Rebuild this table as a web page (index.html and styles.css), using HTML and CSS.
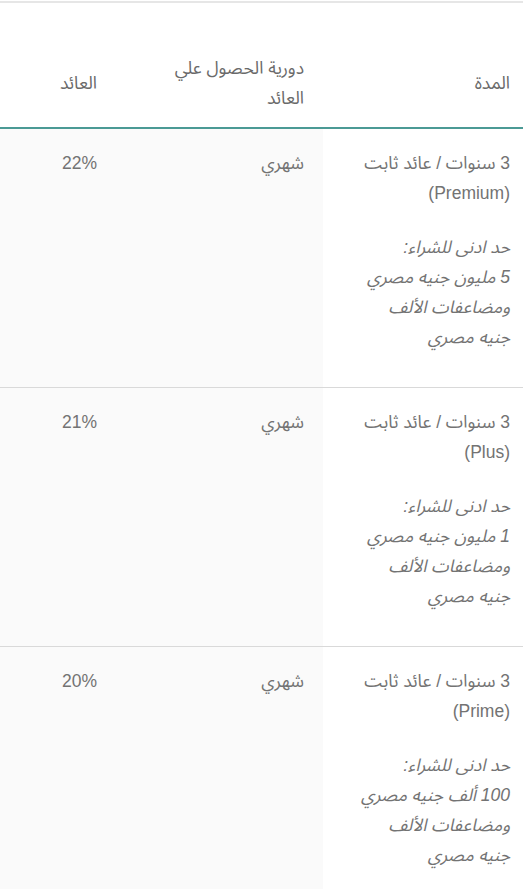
FILE: index.html
```html
<!DOCTYPE html>
<html lang="ar" dir="rtl">
<head>
<meta charset="utf-8">
<link rel="stylesheet" href="styles.css">
</head>
<body>
<table class="rates">
  <colgroup>
    <col class="col-term">
    <col class="col-period">
    <col class="col-yield">
  </colgroup>
  <thead>
    <tr>
      <th class="c-term">المدة</th>
      <th class="c-period">دورية الحصول علي<br>العائد</th>
      <th class="c-yield">العائد</th>
    </tr>
  </thead>
  <tbody>
    <tr>
      <td class="c-term">
        <p class="plan">3 سنوات / عائد ثابت<br>(Premium)</p>
        <p class="min">حد ادنى للشراء:<br>5 مليون جنيه مصري<br>ومضاعفات الألف<br>جنيه مصري</p>
      </td>
      <td class="c-period shade">شهري</td>
      <td class="c-yield shade">22%</td>
    </tr>
    <tr>
      <td class="c-term">
        <p class="plan">3 سنوات / عائد ثابت<br>(Plus)</p>
        <p class="min">حد ادنى للشراء:<br>1 مليون جنيه مصري<br>ومضاعفات الألف<br>جنيه مصري</p>
      </td>
      <td class="c-period shade">شهري</td>
      <td class="c-yield shade">21%</td>
    </tr>
    <tr>
      <td class="c-term">
        <p class="plan">3 سنوات / عائد ثابت<br>(Prime)</p>
        <p class="min">حد ادنى للشراء:<br>100 ألف جنيه مصري<br>ومضاعفات الألف<br>جنيه مصري</p>
      </td>
      <td class="c-period shade">شهري</td>
      <td class="c-yield shade">20%</td>
    </tr>
  </tbody>
</table>
</body>
</html>
```

FILE: styles.css
```css
html, body {
  margin: 0;
  padding: 0;
  background: #ffffff;
}

body {
  font-family: "Liberation Sans", "Noto Sans Arabic", "DejaVu Sans", sans-serif;
  font-size: 17.5px;
  line-height: 30px;
  color: #737373;
}

.rates {
  width: 523px;
  border-collapse: collapse;
  border-top: 2px solid #e6e6e6;
  margin-top: 1px;
  table-layout: fixed;
}

.col-term { width: 200px; }
.col-period { width: 213px; }
.col-yield { width: 110px; }

.rates th {
  font-weight: normal;
  text-align: right;
  vertical-align: middle;
  padding: 50px 13px 14px;
  border-bottom: 2px solid #4b9a95;
  color: #6a6a6a;
}

.rates th.c-period,
.rates td.c-period {
  padding-right: 19px;
}

.rates td {
  text-align: right;
  vertical-align: top;
  padding: 19px 13px 11px;
  border-bottom: 1px solid #d9d9d9;
  white-space: nowrap;
}

.rates td.shade {
  background: #fafafa;
}

.plan {
  margin: 0 0 24px;
}

.min {
  margin: 0 0 24px;
  font-style: italic;
}
```
